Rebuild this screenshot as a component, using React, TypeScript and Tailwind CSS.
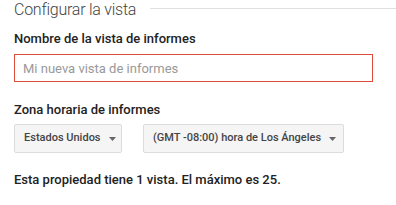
import React from "react";

const Caret = () => (
  <svg width="7" height="4" viewBox="0 0 7 4" className="ml-[8px] shrink-0">
    <path d="M0 0h7L3.5 4z" fill="#666" />
  </svg>
);

const Dropdown = ({ label, width }: { label: string; width: string }) => (
  <div
    className={`flex h-[29px] items-center whitespace-nowrap rounded-[2px] border border-[#dcdcdc] bg-[#f5f5f5] pl-[9px] text-[11px] font-medium text-[#444] ${width}`}
  >
    <span>{label}</span>
    <Caret />
  </div>
);

export default function App() {
  return (
    <div className="h-[205px] w-[396px] bg-white pl-[14px] font-['Roboto',sans-serif]">
      <div className="flex h-[18px]">
        <span className="pt-[1px] text-[16px] font-light leading-[17px] tracking-[-0.25px] text-[#444]">
          Configurar la vista
        </span>
        <div className="ml-[14px] mt-[8px] h-px flex-1 bg-[#e0e0e0]" />
      </div>

      <div className="mt-[13px] text-[13px] font-medium leading-[16px] text-[#222]">
        Nombre de la vista de informes
      </div>
      <input
        className="mt-[7px] block h-[28px] w-[359px] border border-[#dd4b39] px-[8px] text-[13px] text-[#222] outline-none placeholder:text-[#999]"
        placeholder="Mi nueva vista de informes"
      />

      <div className="mt-[20px] text-[13px] font-medium leading-[16px] text-[#222]">
        Zona horaria de informes
      </div>
      <div className="mt-[6px] flex gap-[21px]">
        <Dropdown label="Estados Unidos" width="w-[108px]" />
        <Dropdown label="(GMT -08:00) hora de Los Ángeles" width="w-[201px]" />
      </div>

      <div className="mt-[19px] text-[13px] font-medium leading-[16px] text-[#222]">
        Esta propiedad tiene 1 vista. El máximo es 25.
      </div>
    </div>
  );
}
